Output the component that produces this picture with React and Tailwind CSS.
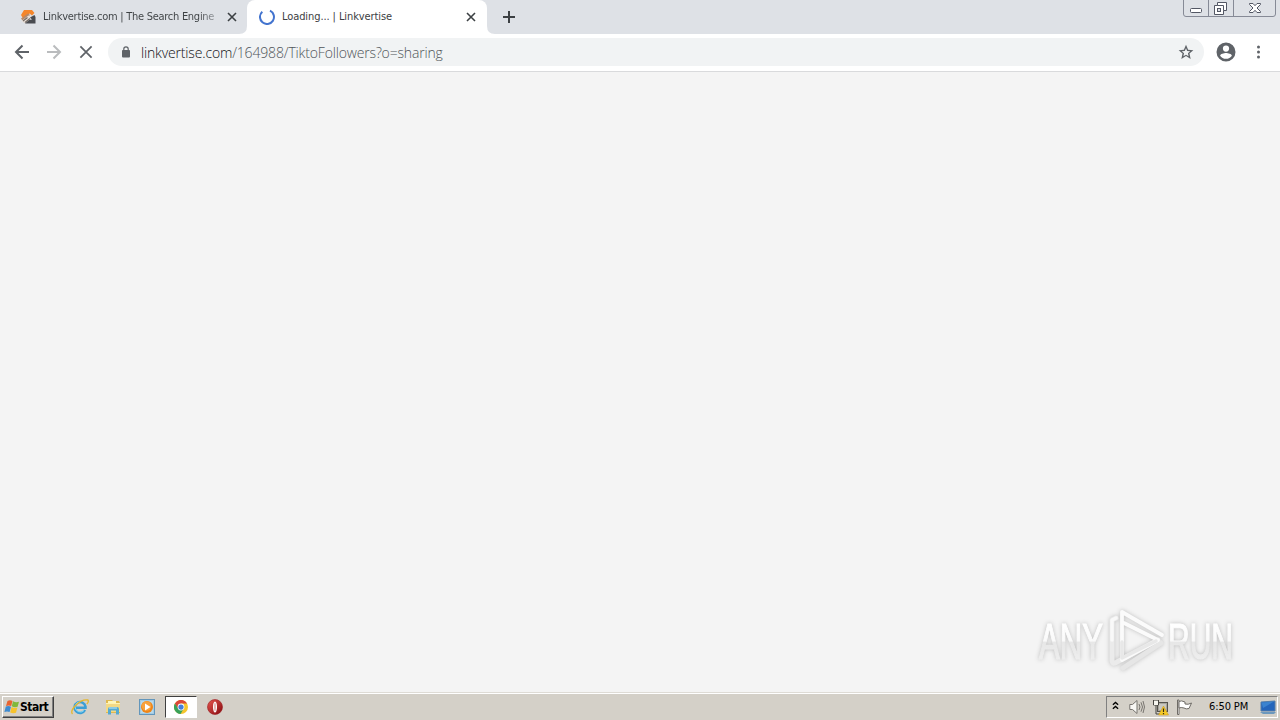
import React from 'react';

function Cross({ className, width = 2 }) {
  return (
    <svg className={className} viewBox="0 0 10 10" fill="none" stroke="currentColor" strokeWidth={width}>
      <path d="M1 1 9 9M9 1 1 9" />
    </svg>
  );
}

function LinkvertiseIcon() {
  return (
    <svg className="h-4 w-4 shrink-0" viewBox="0 0 16 16">
      <path d="M4 1H12L14.5 4 12 6.5 9.5 4.5 3 9.5 1 6Z" fill="#f5862b" />
      <path d="M1 9.5 8 4.5 10 6 3 12Z" fill="#b88967" />
      <path d="M1.5 12 8.5 6.5 12.5 8.5 4.5 14Z" fill="#e9dfd7" />
      <path d="M14.5 6 15.5 8V14.5H5L9 11 12 10.5 10 8.5Z" fill="#494b50" />
      <path d="M3 12 7.5 8.5M5 13.5 10 9.5" fill="none" stroke="#746b65" strokeWidth="1.2" />
    </svg>
  );
}

function TabStrip() {
  return (
    <div className="relative flex h-[34px] bg-[#dee1e6] text-[11px] text-[#3c4043]">
      <div className="flex w-[247px] items-center pl-5">
        <LinkvertiseIcon />
        <span className="ml-[7px] mt-px w-[176px] whitespace-nowrap bg-gradient-to-r from-[#3c4043] from-88% to-[#b2b5bb] bg-clip-text text-transparent tracking-[-0.27px]">Linkvertise.com | The Search Engine</span>
        <Cross className="ml-2 h-[10px] w-[10px]" width={1.6} />
      </div>
      <div className="relative flex w-[240px] items-center rounded-t-lg bg-white pl-3">
        <svg className="absolute bottom-0 -left-2 h-2 w-2" viewBox="0 0 8 8"><path d="M8 0V8H0Q8 8 8 0" fill="#fff" /></svg>
        <svg className="absolute bottom-0 -right-2 h-2 w-2" viewBox="0 0 8 8"><path d="M0 0V8H8Q0 8 0 0" fill="#fff" /></svg>
        <svg className="h-4 w-4" viewBox="0 0 16 16" fill="none" stroke="#4374cf" strokeWidth="2">
          <path d="M11 1.7A7 7 0 1 1 3.3 2.8" />
        </svg>
        <span className="ml-[7px] mt-px w-[184px] whitespace-nowrap tracking-[-0.09px]">Loading... | Linkvertise</span>
        <Cross className="h-[10px] w-[10px]" width={1.6} />
      </div>
      <svg className="ml-[15px] mt-[10px] h-[14px] w-[14px]" viewBox="0 0 14 14" stroke="#3c4043" strokeWidth="2"><path d="M7 1V13M1 7H13" /></svg>
      <svg className="absolute right-[3px] top-0 h-[18px] w-[94px]" viewBox="0 0 94 18" fill="none">
        <path d="M.5 0V14Q.5 16.5 3 16.5H90Q92.5 16.5 92.5 14V0M25.5 0V16M50.5 0V16" stroke="#868a96" />
        <rect x="7.5" y="8.5" width="11" height="4" rx="1" fill="#fff" stroke="#535764" />
        <path d="M34.5 2.5H43.5V10.5H40.5V14.5H31.5V5.5H34.5Z" fill="#fff" stroke="#535764" />
        <path d="M34.5 5.5H40.5V10.5" stroke="#535764" />
        <rect x="34.5" y="8.5" width="3" height="3" fill="#dee1e6" stroke="#535764" />
        <path d="M66.5 3.5H70L72 5.7 74 3.5H77.5V4.5L74 8 77.5 11.5V12.5H74L72 10.3 70 12.5H66.5V11.5L70 8 66.5 4.5Z" fill="#fff" stroke="#535764" />
      </svg>
    </div>
  );
}

function Toolbar() {
  return (
    <div className="flex h-[38px] items-center border-b border-[#d9dadc] bg-white pb-px pl-[14px] text-[#5f6368]">
      <svg className="h-4 w-4" viewBox="0 0 16 16" fill="none" stroke="currentColor" strokeWidth="2"><path d="M15 8H2M8.5 1.5 2 8 8.5 14.5" /></svg>
      <svg className="ml-4 h-4 w-4 text-[#babcbe]" viewBox="0 0 16 16" fill="none" stroke="currentColor" strokeWidth="2"><path d="M1 8H14M7.5 1.5 14 8 7.5 14.5" /></svg>
      <Cross className="ml-[17px] h-[14px] w-[14px]" width={1.25} />
      <div className="ml-[15px] flex h-7 w-[1096px] items-center rounded-full bg-[#f1f3f4] pl-[13px]">
        <svg className="h-3 w-[10px]" viewBox="0 0 10 12"><path d="M1.8 4H8.2Q9 4 9 5V10.5Q9 11.5 8 11.5H2Q1 11.5 1 10.5V5Q1 4 1.8 4" fill="#5f6368" /><path d="M2.8 5V3A2.2 2.2 0 0 1 7.2 3V5" fill="none" stroke="#5f6368" strokeWidth="1.2" /></svg>
        <span className="ml-[10px] whitespace-nowrap font-['Open_Sans','Noto_Sans',sans-serif] text-[14px] font-light tracking-[-0.16px] text-[#50555a]"><span className="text-[#101114]">linkvertise.com</span>/164988/TiktoFollowers?o=sharing</span>
        <svg className="ml-auto mr-[10px] h-4 w-4" viewBox="0 0 24 24" fill="currentColor"><path d="M23 9.2 15.2 8.6 12 1 8.8 8.6 1 9.2 6.8 14.4 5 22.4 12 18.1 19 22.4 17.2 14.4ZM12 16.1 8.1 18.5 9.1 14 5.7 11 10.2 10.6 12 6.4 13.8 10.6 18.3 11 14.9 14 15.9 18.5Z" /></svg>
      </div>
      <svg className="ml-[10px] h-6 w-6" viewBox="0 0 24 24" fill="currentColor"><path d="M12 2.5A9.5 9.5 0 1 0 12 21.5 9.5 9.5 0 0 0 12 2.5M12 5.5A3.1 3.1 0 1 1 12 11.7 3.1 3.1 0 0 1 12 5.5M12 18.8C9.5 18.8 7.4 17.6 6.1 15.7 6.2 13.8 10 12.9 12 12.9S17.8 13.8 17.9 15.7C16.6 17.6 14.5 18.8 12 18.8" /></svg>
      <svg className="ml-[12px] h-4 w-4" viewBox="0 0 16 16" fill="currentColor"><circle cx="8.5" cy="3" r="1.5" /><circle cx="8.5" cy="8" r="1.5" /><circle cx="8.5" cy="13" r="1.5" /></svg>
    </div>
  );
}

function Watermark() {
  return (
    <svg className="h-[80px] w-[230px] overflow-visible drop-shadow-[0_0_2px_#bdbdbd]" viewBox="0 0 230 80">
      <defs>
        <linearGradient id="wm" x1="0" y1="22" x2="0" y2="60" gradientUnits="userSpaceOnUse"><stop offset="0" stopColor="#fff" /><stop offset=".5" stopColor="#fafafa" /><stop offset=".53" stopColor="#e7e7e7" /><stop offset="1" stopColor="#eeeeee" /></linearGradient>
      </defs>
      <g fill="url(#wm)" stroke="url(#wm)" strokeWidth="1.2" fontFamily="'Liberation Sans Narrow','Liberation Sans',sans-serif" fontSize="50">
        <text x="19" y="58.5" textLength="64" lengthAdjust="spacingAndGlyphs">ANY</text>
        <text x="148" y="58.5" textLength="65" lengthAdjust="spacingAndGlyphs">RUN</text>
      </g>
      <g fill="none" strokeLinejoin="round" strokeLinecap="round" strokeWidth="5">
        <path d="M96 18 92 20V61Q93 65 97 62L138 40" stroke="#ebebeb" />
        <path d="M103 68 141 43" stroke="#e6e6e6" />
        <path d="M92 40V20L96 18" stroke="#f9f9f9" strokeWidth="3.5" />
        <path d="M102 57V12L142 35M104 23 138 40 102 60M102 23V58" stroke="#fbfbfb" strokeWidth="3.8" />
        <path d="M102 42V58L136 41" stroke="#e8e8e8" strokeWidth="3.5" />
      </g>
    </svg>
  );
}

function FlagLogo() {
  return (
    <svg className="h-4 w-4 shrink-0" viewBox="0 0 16 16">
      <path d="M3.5 2Q6 .5 8.5 2L7.2 7Q4.8 5.8 2 7Z" fill="#e86431" /><path d="M9 2.3Q12 4 15 2.8L13.6 7.7Q10.7 8.8 7.8 7.3Z" fill="#80b83c" />
      <path d="M1.8 7.6Q4.5 6.6 7 7.7L5.6 13Q3 11.8.4 13Z" fill="#3e8bd0" /><path d="M7.6 8Q10.6 9.6 13.4 8.5L12 13.7Q9.2 14.8 6.2 13.4Z" fill="#f7c32d" />
    </svg>
  );
}

function ExplorerE() {
  return (
    <svg className="h-[18px] w-[18px]" viewBox="0 0 18 18" fill="none">
      <path d="M14 12A5.5 5.5 0 1 1 14.5 8.5V9.7H5" stroke="#3c9fd6" strokeWidth="2.5" /><path d="M13 12.5A5.3 5.3 0 0 1 4 8.5Q5 4 9 4" stroke="#8bdaf4" strokeWidth="1" />
      <path d="M1.5 16Q-1 13 5 7T17 2Q18 4 15.8 6" stroke="#e6b62b" strokeWidth="1.3" />
    </svg>
  );
}

function FolderIcon() {
  return (
    <svg className="h-4 w-4" viewBox="0 0 16 16">
      <path d="M1 1H7L8 2H14L15 4V14H1Z" fill="#dfb950" /><path d="M3 2H11V7H3Z" fill="#fff6ba" /><path d="M1 4H15V13H1Z" fill="#f3d984" />
      <path d="M3 15.5V10Q3 8 5 8H12Q14 8 14 10V15.5H11V11.5H6V15.5Z" fill="#55a9d1" /><path d="M4 9H12" stroke="#c2edf8" /><path d="M1 4.5H15" stroke="#fff2b1" />
    </svg>
  );
}

function MediaIcon() {
  return (
    <svg className="h-4 w-4" viewBox="0 0 16 16"><rect x=".5" y=".5" width="15" height="15" fill="#a3cbe4" stroke="#6396bb" /><rect x="2" y="2" width="12" height="12" fill="#b8d9eb" /><circle cx="8" cy="8" r="6" fill="#ef8518" /><circle cx="7.5" cy="7" r="4.8" fill="#f8a13b" /><path d="M6 4.5 11.5 8 6 11.5Z" fill="#fff" /></svg>
  );
}

function ChromeIcon() {
  return (
    <svg className="h-[14px] w-[14px]" viewBox="0 0 16 16"><circle cx="8" cy="8" r="8" fill="#f5c52d" /><path d="M8 8 4.5 10 1 4A8 8 0 0 1 15 4H8Z" fill="#db4738" /><path d="M1 4A8 8 0 0 0 7.5 16L11 10 8 8 5 10Z" fill="#38a159" /><circle cx="8" cy="8" r="3.9" fill="#fff" /><circle cx="8" cy="8" r="3" fill="#447edb" /></svg>
  );
}

function OperaIcon() {
  return (
    <svg className="h-4 w-4" viewBox="0 0 16 16"><defs><linearGradient id="op" x1="0" y1="0" x2="1" y2="1"><stop stopColor="#e85850" /><stop offset="1" stopColor="#84080e" /></linearGradient></defs><circle cx="8" cy="8" r="7.5" fill="url(#op)" stroke="#9b171c" strokeWidth=".6" /><ellipse cx="8" cy="8" rx="2" ry="5.5" fill="#fff" /><ellipse cx="8" cy="8" rx=".6" ry="4.3" fill="#d48985" /></svg>
  );
}

function Taskbar() {
  return (
    <div className="flex h-7 items-center border-t border-[#dedbd5] bg-[#d4d0c8] pt-px shadow-[inset_0_1px_0_#fff]">
      <div className="ml-0.5 flex h-[22px] w-[52px] items-center border border-t-white border-l-white border-r-[#404040] border-b-[#404040] pl-px shadow-[inset_-1px_-1px_0_#808080]">
        <FlagLogo /><span className="whitespace-nowrap font-['DejaVu_Sans_Condensed','DejaVu_Sans',sans-serif] text-[12px] font-bold tracking-[-0.5px] text-black">Start</span>
      </div>
      <div className="ml-[17px] flex w-[94px] items-center"><ExplorerE /><div className="ml-4"><FolderIcon /></div><div className="ml-[18px]"><MediaIcon /></div></div>
      <div className="flex h-[22px] w-8 items-center justify-center border border-t-[#404040] border-l-[#404040] border-r-white border-b-white bg-white"><ChromeIcon /></div>
      <div className="ml-[10px]"><OperaIcon /></div>
      <div className="ml-auto mr-0.5 flex h-[22px] w-[172px] items-center border border-t-[#808080] border-l-[#808080] border-r-white border-b-white pl-[5px]">
        <svg className="mb-0.5 h-3 w-[7px]" viewBox="0 0 8 12" fill="none" stroke="#000" strokeWidth="1.5"><path d="M1 4.7 4 2 7 4.7M1 9.2 4 6.5 7 9.2" /></svg>
        <svg className="ml-[10px] h-4 w-4" viewBox="0 0 16 16" fill="none" stroke="#77746f"><path d="M.8 5.5H3.5L8 1.5V14.5L3.5 10.5H.8Z" fill="#f8f7f4" /><path d="M10 5Q12 8 10 11M12 3.3Q15 8 12 12.7M14 2Q17 8 14 14" /></svg>
        <svg className="ml-[7px] h-[17px] w-[17px]" viewBox="0 0 17 17"><rect x="5.5" y="3.5" width="10" height="9" fill="#a8a69d" stroke="#55534e" /><rect x="7" y="5" width="7" height="6" fill="#c9c8c2" /><path d="M1.5 1V6H6.5V1M3 1V4M5 1V4M4 6V15H9" fill="none" stroke="#454440" /><path d="M2 2H6V6H2Z" fill="#f6f5ef" /><path d="M11.5 7 16.5 16H6.5Z" fill="#f5ca27" stroke="#c99312" strokeWidth=".5" /><path d="M11.5 9.5V13M11.5 14V15.2" stroke="#352c12" strokeWidth="1.2" /></svg>
        <svg className="ml-[7px] h-4 w-4" viewBox="0 0 16 16" fill="#fff" stroke="#6e6b66"><path d="M1.5 1V15.5H3V1Z" /><path d="M3 2.5Q5 1 9 3V5Q12 6 15.5 4L13 9.5Q10 10.5 8 9Q5 8 3 9Z" /></svg>
        <span className="ml-[17px] w-[44px] whitespace-nowrap text-[11px] tracking-[-0.1px] text-black">6:50 PM</span>
        <svg className="ml-[7px] h-[14px] w-4 shrink-0" viewBox="0 0 16 14"><path d="M1 2 15 1V11H1Z" fill="#2465bb" stroke="#547da7" /><path d="M1.5 2.5 14 1.5 3 8Z" fill="#3b83cf" /><path d="M0 12H16L14 14H3Z" fill="#6c98bd" /></svg>
      </div>
    </div>
  );
}

export default function App() {
  return (
    <div className="flex h-[720px] w-[1280px] flex-col overflow-hidden bg-[#f4f4f4] font-['DejaVu_Sans_Condensed','DejaVu_Sans',sans-serif]">
      <TabStrip />
      <Toolbar />
      <main className="flex flex-1 items-end justify-end pb-3 pr-[30px]"><Watermark /></main>
      <Taskbar />
    </div>
  );
}
